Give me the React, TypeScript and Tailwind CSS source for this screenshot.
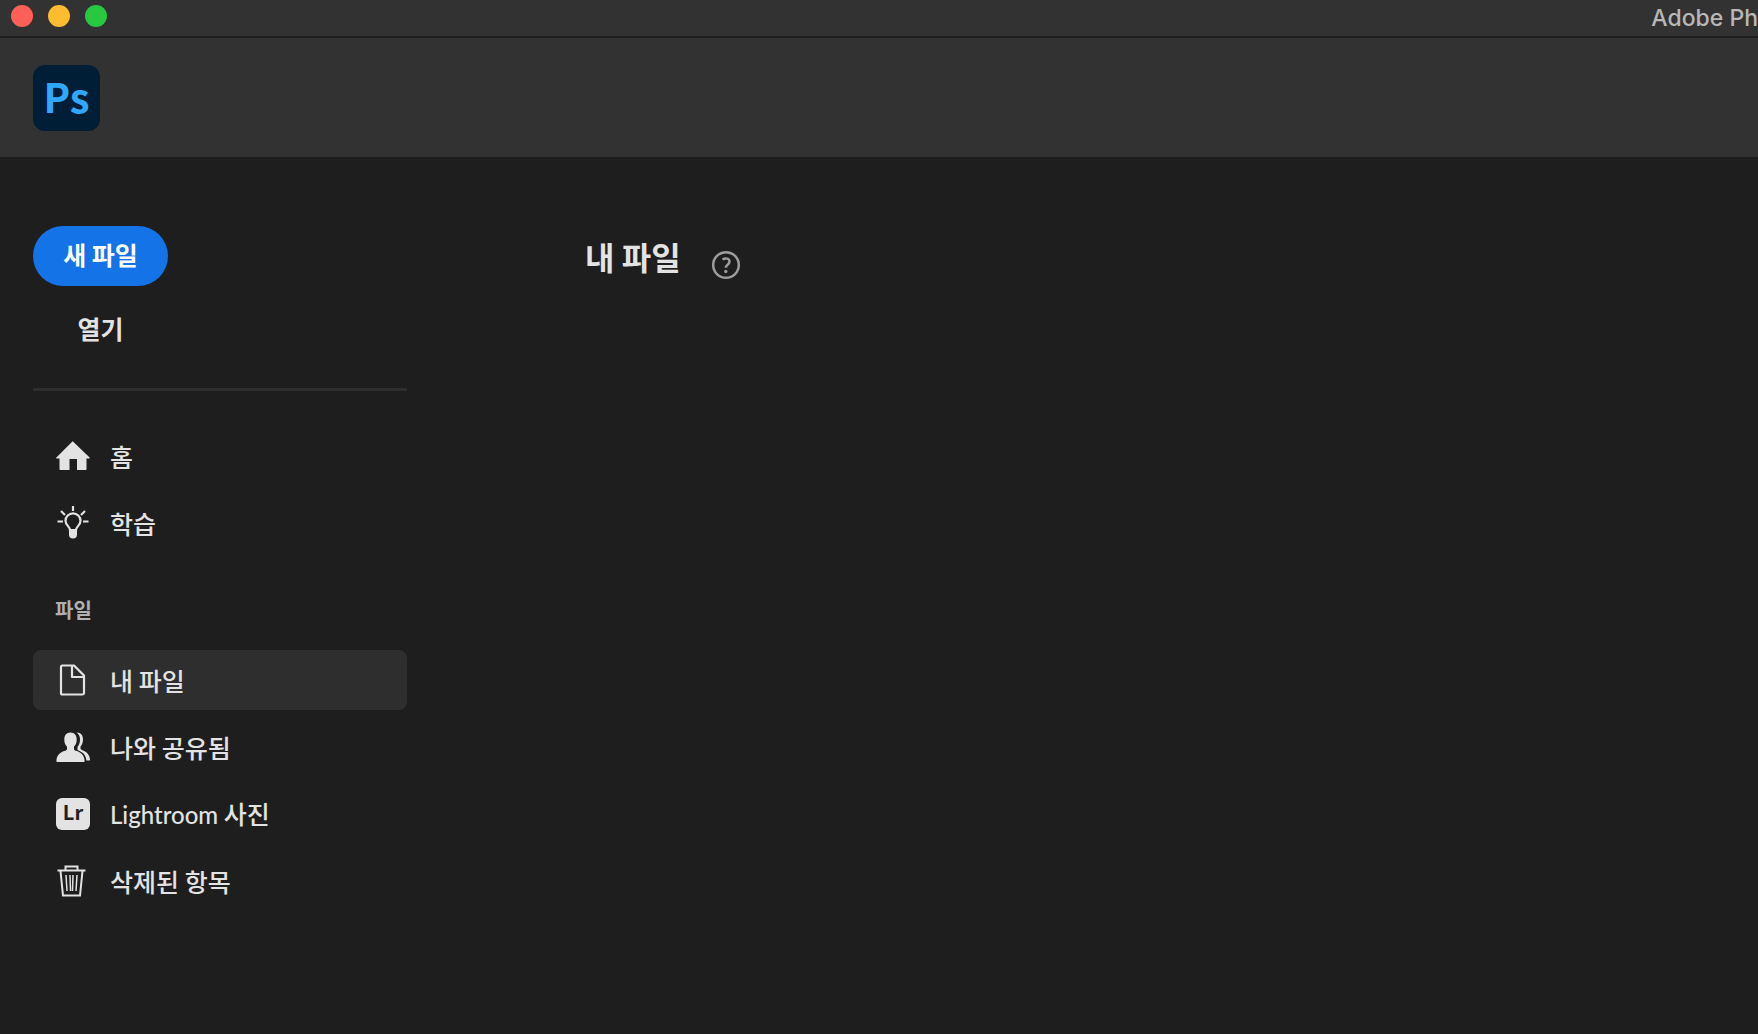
import type { ReactNode } from "react";
import { clsx } from "clsx";

type NavItem = {
  id: string;
  label: ReactNode;
  icon: ReactNode;
};

const HomeIcon = () => (
  <svg viewBox="0 0 34 34" className="size-[34px]" fill="currentColor" aria-hidden="true">
    <path d="M17 2.5 33.6 18.5c.4.5.2 1-.5 1h-2.6v10.700c0 .5-.3.8-.8.8H21V20h-7.500v11H4.300c-.5 0-.8-.3-.8-.8V19.500H.9c-.7 0-.9-.5-.5-1L16.400 2.500c.2-.2.4-.2.6 0Z" />
  </svg>
);

const LearnIcon = () => (
  <svg viewBox="0 0 34 34" className="size-[34px]" fill="none" stroke="currentColor" strokeWidth="2.200" aria-hidden="true">
    <path d="M14 24c0-3.500-4.500-4.500-4.500-9.200a7.500 7.500 0 0 1 15 0c0 4.700-4.500 5.700-4.500 9.200Z" />
    <path d="M13 24h8v4.500a4 4 0 0 1-8 0Z" fill="currentColor" stroke="none" />
    <path d="M17 0v5M1.500 15.500H7M27 15.500h5.500M5 5l4 4M29 5l-4 4" />
  </svg>
);

const FileIcon = () => (
  <svg viewBox="0 0 34 34" className="size-[34px]" fill="none" stroke="currentColor" strokeWidth="2.200" strokeLinejoin="round" aria-hidden="true">
    <path d="M6.500 2.500h11.500l10 10v17.500a1.500 1.500 0 0 1-1.500 1.500h-20a1.500 1.500 0 0 1-1.500-1.500v-26a1.500 1.500 0 0 1 1.500-1.500Z" />
    <path d="M16 2.500v11.500h12" />
  </svg>
);

const SharedIcon = () => (
  <svg viewBox="0 0 34 34" className="size-[34px]" fill="currentColor" aria-hidden="true">
    <path d="M14.500 2.500c4.200 0 6.200 3 6.200 7 0 3-1 5.600-2.700 7.300v2c0 1 .6 1.600 1.800 2 4.800 1.500 8.400 4 8.800 9.700 0 1-.3 1.500-1 1.500H1.400c-.7 0-1-.5-1-1.500.4-5.700 4-8.200 8.800-9.700 1.200-.4 1.800-1 1.800-2v-2C9.300 15.100 8.300 12.500 8.300 9.500c0-4 2-7 6.200-7Z" />
    <path d="M20.500 2.500c4.500-.2 6.500 3 6.500 7 0 3-1 5.400-2.500 7v1.500c0 1 .4 1.500 1.500 1.900 4.400 1.600 7.600 4.300 8 9.600 0 .7-.3 1-1 1h-2.600c-.3-4.700-2.900-8.200-8.900-10.500v-3c1.500-2 2.500-4.500 2.500-7.500 0-3-1.200-5.500-3.500-7Z" />
  </svg>
);

const LightroomIcon = () => (
  <span className="flex h-8 w-[34px] items-center justify-center rounded-md bg-[#e3e3e3] pb-1 text-[20px] leading-none font-bold text-[#1e1e1e]">
    Lr
  </span>
);

const TrashIcon = () => (
  <svg viewBox="0 0 34 34" className="size-[34px]" fill="none" stroke="currentColor" strokeWidth="2" aria-hidden="true">
    <path d="M1.500 6.500h28M9.500 6V2.500h12V6M4.500 7l2.500 24.500h17L26.500 7" />
    <path d="M10 11l1 16M14 11l.5 16M17 11l-.5 16M21 11l-1 16" strokeWidth="1.500" />
  </svg>
);

const mainItems: NavItem[] = [
  { id: "home", label: "홈", icon: <HomeIcon /> },
  { id: "learn", label: "학습", icon: <LearnIcon /> },
];

const fileItems: NavItem[] = [
  { id: "my-files", label: "내 파일", icon: <FileIcon /> },
  { id: "shared", label: "나와 공유됨", icon: <SharedIcon /> },
  {
    id: "lightroom",
    label: (
      <>
        <span className="font-[Lato,sans-serif] text-[24px]">Lightroom</span> 사진
      </>
    ),
    icon: <LightroomIcon />,
  },
  { id: "deleted", label: "삭제된 항목", icon: <TrashIcon /> },
];

function NavList({ items, active }: { items: NavItem[]; active?: string }) {
  return (
    <ul className="flex flex-col gap-[7px]">
      {items.map((item) => (
        <li key={item.id}>
          <a
            href={`#${item.id}`}
            aria-current={item.id === active ? "page" : undefined}
            className={clsx(
              "flex h-[60px] items-center gap-5 rounded-lg pl-[23px]",
              item.id === active && "bg-[#2e2e2e]"
            )}
          >
            {item.icon}
            <span>{item.label}</span>
          </a>
        </li>
      ))}
    </ul>
  );
}

export default function App() {
  return (
    <div className="flex min-h-screen flex-col overflow-hidden bg-[#1e1e1e] font-['Noto_Sans_CJK_KR',sans-serif] text-[25px] leading-8 text-[#e3e3e3]">
      <div className="flex h-[38px] items-center justify-between border-b-2 border-[#1f1f1f] bg-[#323232] pl-[11px]">
        <div className="flex gap-[15px] pb-1">
          <button aria-label="닫기" className="size-[22px] rounded-full bg-[#ff5f57]" />
          <button aria-label="최소화" className="size-[22px] rounded-full bg-[#febc2e]" />
          <button aria-label="확대" className="size-[22px] rounded-full bg-[#28c840]" />
        </div>
        <span className="font-[Inter,sans-serif] text-[23px] font-medium text-[#b8b8b8]">Adobe Ph</span>
      </div>

      <header className="flex h-[119px] items-center bg-[#323232] pl-[33px]">
        <div className="flex h-[66px] w-[67px] items-center justify-center rounded-xl bg-[#001e36] pb-1 text-[40px] leading-none font-bold text-[#31a8ff]">
          Ps
        </div>
      </header>

      <div className="flex grow">
        <aside className="w-[407px] shrink-0 pt-[69px] pl-[33px]">
          <div className="flex flex-col items-start font-bold">
            <button className="h-[60px] w-[135px] rounded-full bg-[#1473e6] pb-1 text-white">새 파일</button>
            <button className="mt-3 h-[60px] w-[135px] rounded-full">열기</button>
          </div>
          <hr className="mt-[30px] mb-[35px] border-t-[3px] border-[#2e2e2e]" />
          <nav className="font-medium">
            <NavList items={mainItems} />
            <h2 className="mt-[41px] mb-6 pl-[22px] text-[20px] font-bold text-[#b0b0b0]">파일</h2>
            <NavList items={fileItems} active="my-files" />
          </nav>
        </aside>

        <main className="grow pt-[79px] pl-[178px]">
          <div className="flex items-start gap-[30px]">
            <h1 className="text-[32px] leading-10 font-bold">내 파일</h1>
            <button aria-label="도움말" className="mt-[14px] text-[#9c9c9c]">
              <svg viewBox="0 0 30 30" className="size-[30px]" fill="none" stroke="currentColor" strokeWidth="2.500" aria-hidden="true">
                <circle cx="15" cy="15" r="12.800" />
                <path d="M11.500 9.500c3-2 7-1 7 2 0 3-3.700 3.200-3.700 6.300" />
                <circle cx="14.800" cy="21.500" r="1.700" fill="currentColor" stroke="none" />
              </svg>
            </button>
          </div>
        </main>
      </div>
    </div>
  );
}
